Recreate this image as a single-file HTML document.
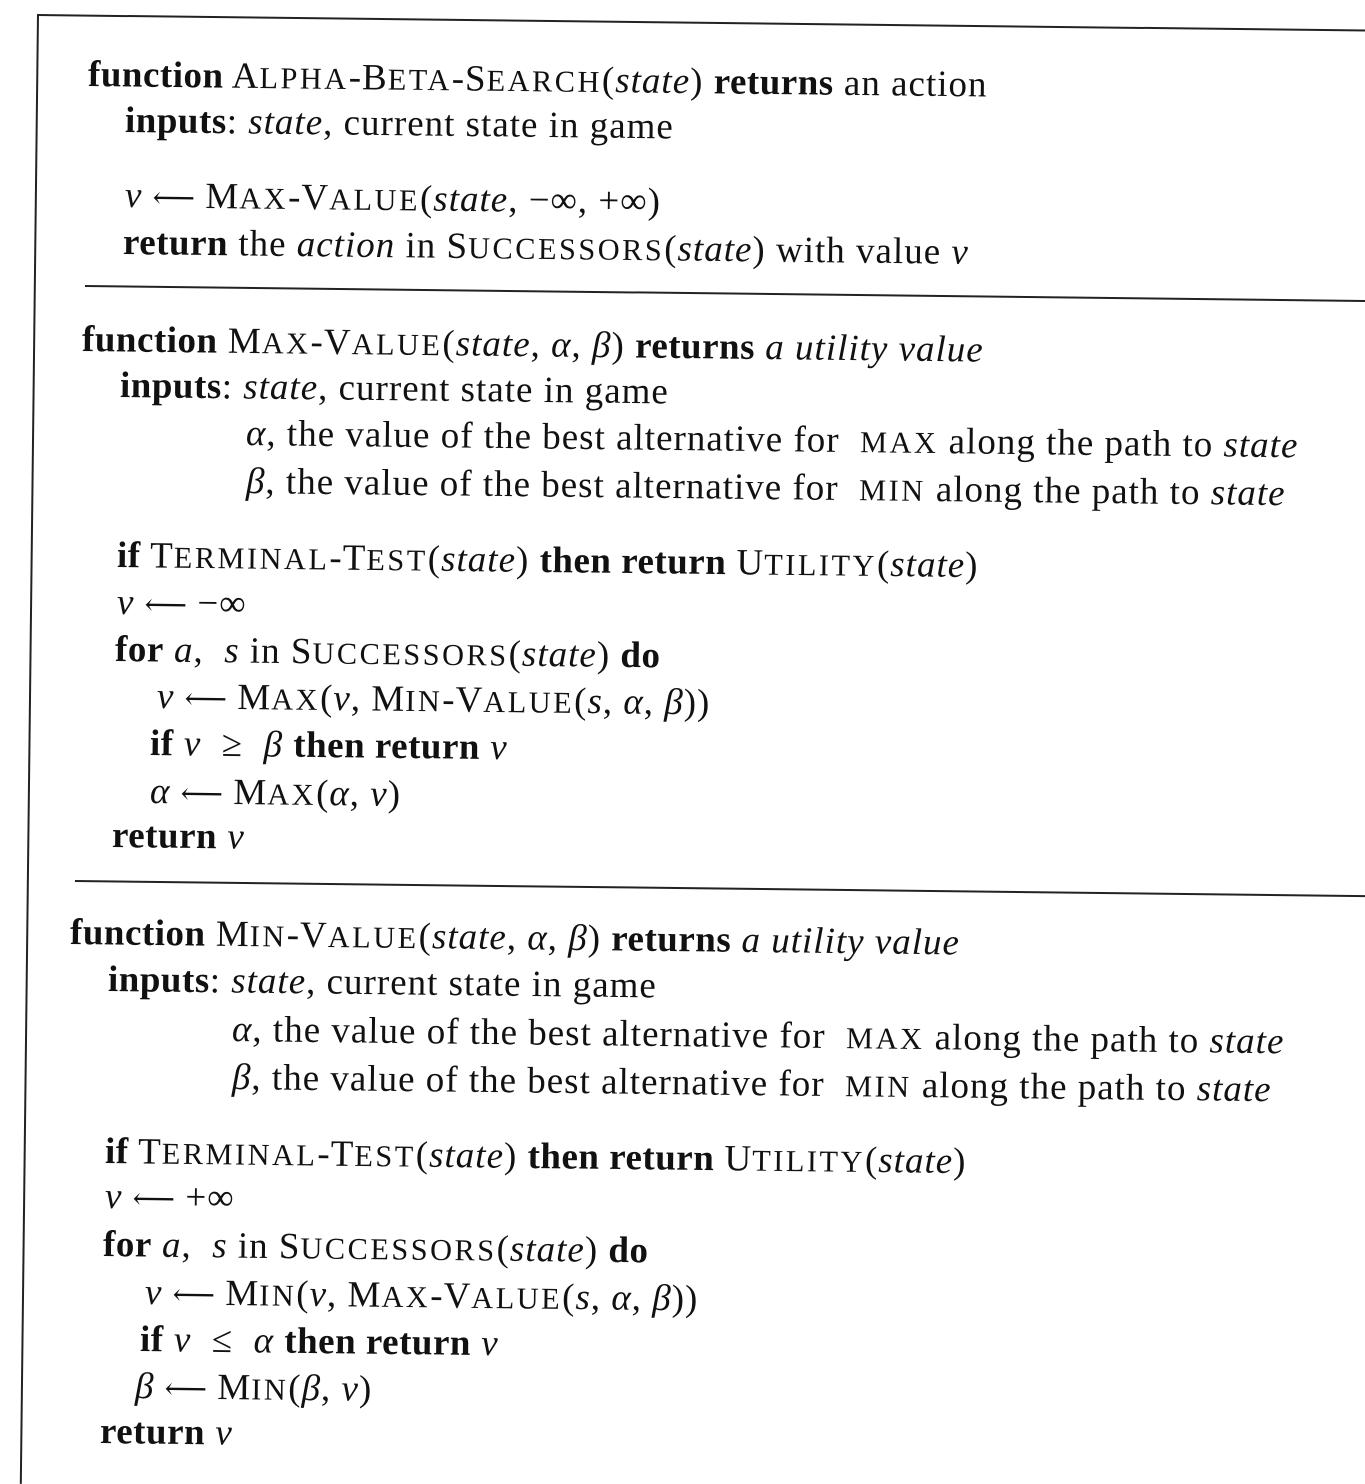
<!DOCTYPE html>
<html><head><meta charset="utf-8"><style>
html,body{margin:0;padding:0;background:#fff;}
body{width:1365px;height:1473px;position:relative;overflow:hidden;font-family:"Liberation Serif","DejaVu Serif",serif;color:#111;}
.l{position:absolute;white-space:nowrap;font-size:37px;letter-spacing:1px;line-height:44px;height:44px;transform-origin:0 50%;transform:rotate(0.67deg);}
b{font-weight:bold;letter-spacing:0.5px;}
i{font-style:italic;}
.s{font-size:0.82em;letter-spacing:2.5px;}
.a{font-family:"DejaVu Serif",serif;font-size:0.8em;letter-spacing:0;}
.h{position:absolute;height:2px;background:#222;transform-origin:0 0;transform:rotate(0.67deg);}
.v{position:absolute;width:2px;background:#222;transform-origin:0 0;transform:rotate(0.67deg);}
</style></head><body>
<div class="h" style="left:37px;top:14px;width:1340px;"></div>
<div class="v" style="left:37px;top:14px;height:1470px;"></div>
<div class="h" style="left:85px;top:285px;width:1290px;"></div>
<div class="h" style="left:75px;top:880px;width:1300px;"></div>

<div class="l" style="left:88px;top:53px"><b>function</b> A<span class="s">LPHA</span>-B<span class="s">ETA</span>-S<span class="s">EARCH</span>(<i>state</i>) <b>returns</b> an action</div>
<div class="l" style="left:125px;top:99px"><b>inputs</b>: <i>state</i>, current state in game</div>
<div class="l" style="left:125px;top:174px"><i>v</i> <span class="a">⟵</span> M<span class="s">AX</span>-V<span class="s">ALUE</span>(<i>state</i>, −∞, +∞)</div>
<div class="l" style="left:123px;top:221px"><b>return</b> the <i>action</i> in S<span class="s">UCCESSORS</span>(<i>state</i>) with value <i>v</i></div>

<div class="l" style="left:82px;top:318px"><b>function</b> M<span class="s">AX</span>-V<span class="s">ALUE</span>(<i>state</i>, <i>α</i>, <i>β</i>) <b>returns</b> <i>a utility value</i></div>
<div class="l" style="left:120px;top:364px"><b>inputs</b>: <i>state</i>, current state in game</div>
<div class="l" style="left:246px;top:412px"><i>α</i>, the value of the best alternative for &nbsp;<span class="s">MAX</span> along the path to <i>state</i></div>
<div class="l" style="left:246px;top:460px"><i>β</i>, the value of the best alternative for &nbsp;<span class="s">MIN</span> along the path to <i>state</i></div>
<div class="l" style="left:117px;top:534px"><b>if</b> T<span class="s">ERMINAL</span>-T<span class="s">EST</span>(<i>state</i>) <b>then return</b> U<span class="s">TILITY</span>(<i>state</i>)</div>
<div class="l" style="left:117px;top:581px"><i>v</i> <span class="a">⟵</span> −∞</div>
<div class="l" style="left:115px;top:628px"><b>for</b> <i>a</i>, &nbsp;<i>s</i> in S<span class="s">UCCESSORS</span>(<i>state</i>) <b>do</b></div>
<div class="l" style="left:157px;top:675px"><i>v</i> <span class="a">⟵</span> M<span class="s">AX</span>(<i>v</i>, M<span class="s">IN</span>-V<span class="s">ALUE</span>(<i>s</i>, <i>α</i>, <i>β</i>))</div>
<div class="l" style="left:150px;top:722px"><b>if</b> <i>v</i> &nbsp;≥ &nbsp;<i>β</i> <b>then return</b> <i>v</i></div>
<div class="l" style="left:150px;top:770px"><i>α</i> <span class="a">⟵</span> M<span class="s">AX</span>(<i>α</i>, <i>v</i>)</div>
<div class="l" style="left:112px;top:814px"><b>return</b> <i>v</i></div>

<div class="l" style="left:70px;top:911px"><b>function</b> M<span class="s">IN</span>-V<span class="s">ALUE</span>(<i>state</i>, <i>α</i>, <i>β</i>) <b>returns</b> <i>a utility value</i></div>
<div class="l" style="left:108px;top:958px"><b>inputs</b>: <i>state</i>, current state in game</div>
<div class="l" style="left:232px;top:1008px"><i>α</i>, the value of the best alternative for &nbsp;<span class="s">MAX</span> along the path to <i>state</i></div>
<div class="l" style="left:232px;top:1056px"><i>β</i>, the value of the best alternative for &nbsp;<span class="s">MIN</span> along the path to <i>state</i></div>
<div class="l" style="left:105px;top:1130px"><b>if</b> T<span class="s">ERMINAL</span>-T<span class="s">EST</span>(<i>state</i>) <b>then return</b> U<span class="s">TILITY</span>(<i>state</i>)</div>
<div class="l" style="left:105px;top:1175px"><i>v</i> <span class="a">⟵</span> +∞</div>
<div class="l" style="left:103px;top:1223px"><b>for</b> <i>a</i>, &nbsp;<i>s</i> in S<span class="s">UCCESSORS</span>(<i>state</i>) <b>do</b></div>
<div class="l" style="left:145px;top:1271px"><i>v</i> <span class="a">⟵</span> M<span class="s">IN</span>(<i>v</i>, M<span class="s">AX</span>-V<span class="s">ALUE</span>(<i>s</i>, <i>α</i>, <i>β</i>))</div>
<div class="l" style="left:140px;top:1318px"><b>if</b> <i>v</i> &nbsp;≤ &nbsp;<i>α</i> <b>then return</b> <i>v</i></div>
<div class="l" style="left:135px;top:1365px"><i>β</i> <span class="a">⟵</span> M<span class="s">IN</span>(<i>β</i>, <i>v</i>)</div>
<div class="l" style="left:100px;top:1410px"><b>return</b> <i>v</i></div>
</body></html>
